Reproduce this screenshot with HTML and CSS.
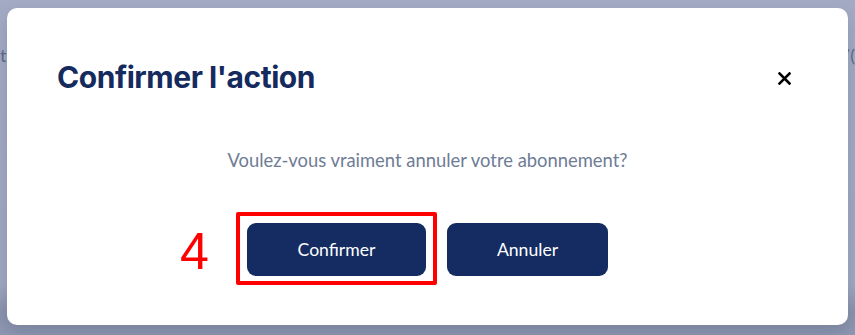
FILE: index.html
```html
<!DOCTYPE html>
<html lang="fr">
<head>
<meta charset="utf-8">
<link rel="stylesheet" href="styles.css">
</head>
<body>
<div class="backdrop">
  <span class="bg-text bg-left">t</span>
  <span class="bg-text bg-right">/(</span>
  <div class="modal">
    <div class="modal-header">
      <h2 class="modal-title">Confirmer l'action</h2>
      <button class="close-btn" aria-label="Fermer">
        <svg width="13" height="13" viewBox="0 0 13 13"><path d="M1.5 1.5 L11.5 11.5 M11.5 1.5 L1.5 11.5" stroke="#000" stroke-width="2.6" stroke-linecap="square" fill="none"/></svg>
      </button>
    </div>
    <p class="modal-message">Voulez-vous vraiment annuler votre abonnement?</p>
    <div class="modal-actions">
      <div class="annotated">
        <span class="step-number">4</span>
        <span class="highlight-box"></span>
        <button class="btn btn-confirm">Confirmer</button>
      </div>
      <button class="btn btn-cancel">Annuler</button>
    </div>
  </div>
</div>
</body>
</html>
```

FILE: styles.css
```css
html, body {
  margin: 0;
  padding: 0;
}
body {
  width: 855px;
  height: 335px;
  overflow: hidden;
  background: #a1aac3;
}
.backdrop {
  position: relative;
  height: 335px;
  padding: 8px 7px 0;
  box-sizing: border-box;
  background: linear-gradient(#a3abc4 0%, #a0a9c2 85%, #8a93ad 93%, #8f98b2 100%);
}
.bg-text {
  position: absolute;
  top: 44px;
  font-family: "Lato", sans-serif;
  font-size: 18px;
  color: #5d6b8c;
}
.bg-left { left: 0; }
.bg-right { right: 0; }
.modal {
  position: relative;
  height: 317px;
  background: #ffffff;
  border-radius: 10px;
  box-shadow: 0 8px 16px rgba(40, 50, 80, 0.18);
  padding: 0 57px 0 50px;
  box-sizing: border-box;
  display: flex;
  flex-direction: column;
}
.modal-header {
  display: flex;
  justify-content: space-between;
  align-items: center;
  margin-top: 51px;
}
.modal-title {
  margin: 0;
  font-family: "Inter", sans-serif;
  font-weight: 700;
  font-size: 30px;
  line-height: 36px;
  color: #152b5e;
  letter-spacing: -0.45px;
}
.close-btn {
  border: 0;
  background: none;
  padding: 0;
  width: 13px;
  height: 13px;
  display: flex;
  margin-top: 2px;
}
.modal-message {
  margin: 53px 0 0;
  text-align: center;
  font-family: "Lato", sans-serif;
  font-size: 18.4px;
  line-height: 24px;
  color: #6e7c95;
  padding-left: 7px;
}
.modal-actions {
  margin-top: 51px;
  display: flex;
  justify-content: center;
  gap: 21px;
  padding-left: 7px;
}
.annotated {
  position: relative;
  display: flex;
}
.btn {
  height: 53px;
  border: 0;
  border-radius: 9px;
  background: #142c61;
  color: #ffffff;
  font-family: "Lato", sans-serif;
  font-size: 17.6px;
}
.btn-confirm { width: 179px; }
.btn-cancel { width: 161px; }
.highlight-box {
  position: absolute;
  left: -11px;
  top: -11px;
  width: 201px;
  height: 73px;
  box-sizing: border-box;
  border: 4px solid #ff0000;
  border-radius: 2px;
}
.step-number {
  position: absolute;
  left: -67px;
  top: -2px;
  font-family: "Liberation Sans", sans-serif;
  font-size: 52px;
  line-height: 60px;
  color: #ff0000;
}
```
